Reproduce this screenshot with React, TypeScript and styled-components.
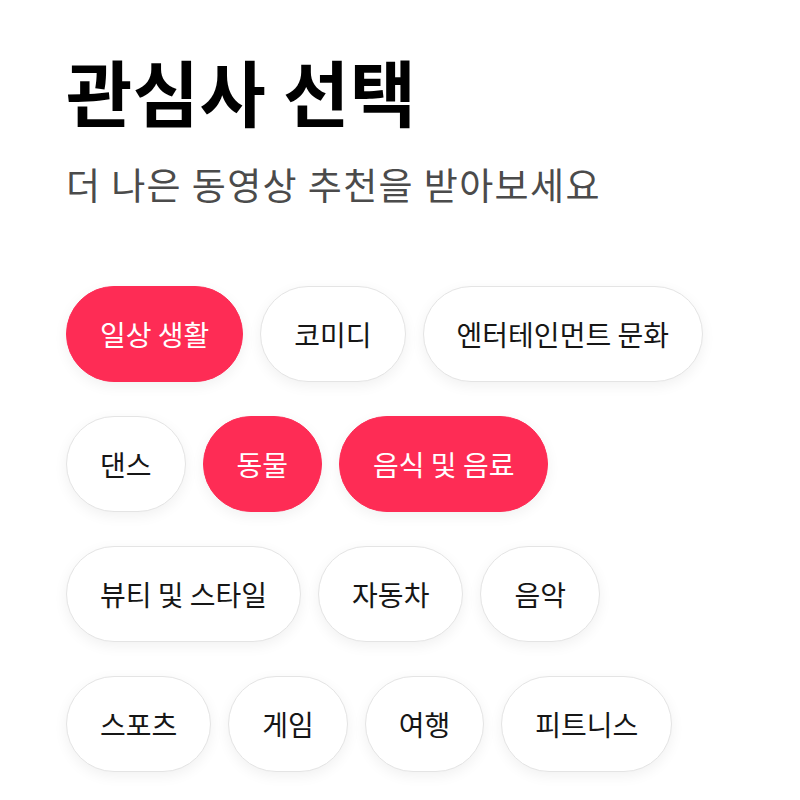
import React, { useState } from "react";
import styled, { createGlobalStyle } from "styled-components";

const GlobalStyle = createGlobalStyle`
  html, body {
    margin: 0;
    padding: 0;
    background: #ffffff;
  }
  body {
    font-family: "Noto Sans CJK KR", "Noto Sans", sans-serif;
  }
`;

const Page = styled.main`
  width: 800px;
  min-height: 800px;
  box-sizing: border-box;
  padding: 38px 66px 0 66px;
  background: #ffffff;
`;

const Title = styled.h1`
  margin: 0;
  font-size: 72px;
  line-height: 104px;
  font-weight: 700;
  letter-spacing: 0.5px;
  color: #000000;
`;

const Subtitle = styled.p`
  margin: 17px 0 0 0;
  font-size: 37px;
  line-height: 50px;
  font-weight: 400;
  letter-spacing: 1.4px;
  color: #4b4b4b;
`;

const ChipGrid = styled.div`
  display: flex;
  flex-direction: column;
  row-gap: 34px;
  margin-top: 77px;
`;

const Row = styled.div`
  display: flex;
  gap: 17px;
`;

const Chip = styled.button<{ $active: boolean }>`
  height: 96px;
  padding: 0 33px;
  border-radius: 48px;
  font-family: inherit;
  font-size: 28px;
  font-weight: 400;
  cursor: pointer;
  box-sizing: border-box;
  background: ${(p) => (p.$active ? "#fe2c55" : "#ffffff")};
  color: ${(p) => (p.$active ? "#ffffff" : "#161616")};
  border: 1px solid ${(p) => (p.$active ? "#fe2c55" : "#e4e4e4")};
  box-shadow: 0 4px 14px rgba(0, 0, 0, 0.06);
  white-space: nowrap;
`;

const rows: string[][] = [
  ["일상 생활", "코미디", "엔터테인먼트 문화"],
  ["댄스", "동물", "음식 및 음료"],
  ["뷰티 및 스타일", "자동차", "음악"],
  ["스포츠", "게임", "여행", "피트니스"],
];

export default function App() {
  const [selected, setSelected] = useState<string[]>(["일상 생활", "동물", "음식 및 음료"]);
  const toggle = (t: string) =>
    setSelected((s) => (s.includes(t) ? s.filter((x) => x !== t) : [...s, t]));

  return (
    <>
      <GlobalStyle />
      <Page>
        <Title>관심사 선택</Title>
        <Subtitle>더 나은 동영상 추천을 받아보세요</Subtitle>
        <ChipGrid>
          {rows.map((r, i) => (
            <Row key={i}>
              {r.map((t) => (
                <Chip key={t} $active={selected.includes(t)} onClick={() => toggle(t)}>
                  {t}
                </Chip>
              ))}
            </Row>
          ))}
        </ChipGrid>
      </Page>
    </>
  );
}
